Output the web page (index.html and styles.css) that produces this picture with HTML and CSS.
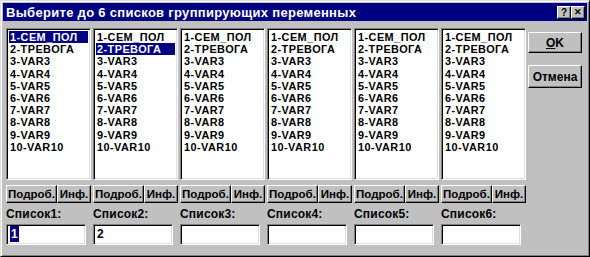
FILE: index.html
```html
<!DOCTYPE html>
<html lang="ru">
<head>
<meta charset="utf-8">
<title>Выберите до 6 списков группирующих переменных</title>
<link rel="stylesheet" href="styles.css">
</head>
<body>
<div class="window">
  <div class="titlebar">
    <span class="title">Выберите до 6 списков группирующих переменных</span>
    <div class="tbtns">
      <span class="tbtn">?</span><span class="tbtn x">✕</span>
    </div>
  </div>
  <div class="content">
    <div class="cols">
      <div class="col">
        <ul class="list">
          <li class="sel focus">1-СЕМ_ПОЛ</li><li>2-ТРЕВОГА</li><li>3-VAR3</li><li>4-VAR4</li><li>5-VAR5</li><li>6-VAR6</li><li>7-VAR7</li><li>8-VAR8</li><li>9-VAR9</li><li>10-VAR10</li>
        </ul>
        <div class="btnrow"><span class="btn wide">Подроб.</span><span class="btn narrow">Инф.</span></div>
        <div class="label">Список1:</div>
        <div class="input"><span class="seltext">1</span></div>
      </div>
      <div class="col">
        <ul class="list">
          <li>1-СЕМ_ПОЛ</li><li class="sel">2-ТРЕВОГА</li><li>3-VAR3</li><li>4-VAR4</li><li>5-VAR5</li><li>6-VAR6</li><li>7-VAR7</li><li>8-VAR8</li><li>9-VAR9</li><li>10-VAR10</li>
        </ul>
        <div class="btnrow"><span class="btn wide">Подроб.</span><span class="btn narrow">Инф.</span></div>
        <div class="label">Список2:</div>
        <div class="input">2</div>
      </div>
      <div class="col">
        <ul class="list">
          <li>1-СЕМ_ПОЛ</li><li>2-ТРЕВОГА</li><li>3-VAR3</li><li>4-VAR4</li><li>5-VAR5</li><li>6-VAR6</li><li>7-VAR7</li><li>8-VAR8</li><li>9-VAR9</li><li>10-VAR10</li>
        </ul>
        <div class="btnrow"><span class="btn wide">Подроб.</span><span class="btn narrow">Инф.</span></div>
        <div class="label">Список3:</div>
        <div class="input"></div>
      </div>
      <div class="col">
        <ul class="list">
          <li>1-СЕМ_ПОЛ</li><li>2-ТРЕВОГА</li><li>3-VAR3</li><li>4-VAR4</li><li>5-VAR5</li><li>6-VAR6</li><li>7-VAR7</li><li>8-VAR8</li><li>9-VAR9</li><li>10-VAR10</li>
        </ul>
        <div class="btnrow"><span class="btn wide">Подроб.</span><span class="btn narrow">Инф.</span></div>
        <div class="label">Список4:</div>
        <div class="input"></div>
      </div>
      <div class="col">
        <ul class="list">
          <li>1-СЕМ_ПОЛ</li><li>2-ТРЕВОГА</li><li>3-VAR3</li><li>4-VAR4</li><li>5-VAR5</li><li>6-VAR6</li><li>7-VAR7</li><li>8-VAR8</li><li>9-VAR9</li><li>10-VAR10</li>
        </ul>
        <div class="btnrow"><span class="btn wide">Подроб.</span><span class="btn narrow">Инф.</span></div>
        <div class="label">Список5:</div>
        <div class="input"></div>
      </div>
      <div class="col">
        <ul class="list">
          <li>1-СЕМ_ПОЛ</li><li>2-ТРЕВОГА</li><li>3-VAR3</li><li>4-VAR4</li><li>5-VAR5</li><li>6-VAR6</li><li>7-VAR7</li><li>8-VAR8</li><li>9-VAR9</li><li>10-VAR10</li>
        </ul>
        <div class="btnrow"><span class="btn wide">Подроб.</span><span class="btn narrow">Инф.</span></div>
        <div class="label">Список6:</div>
        <div class="input"></div>
      </div>
    </div>
    <div class="side">
      <span class="btn big ok"><u>O</u>K</span>
      <span class="btn big cancel">Отмена</span>
    </div>
  </div>
</div>
</body>
</html>
```
FILE: styles.css
```css
html, body {
  margin: 0;
  padding: 0;
  background: #c0c0c0;
}
body {
  font-family: "Liberation Sans", Arial, sans-serif;
  font-size: 12px;
  color: #000;
}
.window {
  box-sizing: border-box;
  width: 590px;
  height: 257px;
  background: #c0c0c0;
  border-top: 1px solid #dfdfdf;
  border-left: 1px solid #dfdfdf;
  border-right: 1px solid #000;
  border-bottom: 1px solid #000;
  box-shadow: inset 1px 1px 0 #fff, inset -1px -1px 0 #808080;
  padding: 2px;
}
.titlebar {
  height: 18px;
  background: #000080;
  display: flex;
  align-items: center;
  justify-content: space-between;
  padding: 0 2px 0 3px;
}
.title {
  color: #fff;
  font-weight: bold;
  font-size: 13px;
  letter-spacing: 0.3px;
}
.tbtns {
  display: flex;
}
.tbtn {
  box-sizing: border-box;
  width: 14px;
  height: 13px;
  background: #c0c0c0;
  border-top: 1px solid #fff;
  border-left: 1px solid #fff;
  border-right: 1px solid #000;
  border-bottom: 1px solid #000;
  box-shadow: inset -1px -1px 0 #808080;
  font-weight: bold;
  font-size: 10px;
  line-height: 11px;
  text-align: center;
}
.tbtn.x {
  font-size: 9px;
}
.content {
  display: flex;
  padding: 7px 0 0 3px;
}
.cols {
  display: flex;
  gap: 2px;
}
.col {
  width: 85px;
  display: flex;
  flex-direction: column;
}
.list {
  box-sizing: border-box;
  list-style: none;
  margin: 0;
  height: 152px;
  background: #fff;
  border-top: 1px solid #808080;
  border-left: 1px solid #808080;
  border-right: 1px solid #fff;
  border-bottom: 1px solid #fff;
  box-shadow: inset 1px 1px 0 #000, inset -1px -1px 0 #dfdfdf;
  padding: 2px 2px 0 2px;
  font-weight: bold;
  font-size: 10.9px;
  letter-spacing: 0.45px;
}
.list li {
  height: 12.2px;
  line-height: 12.2px;
  padding-left: 1px;
  white-space: nowrap;
}
.list li.sel {
  background: #000080;
  color: #fff;
}
.btnrow {
  display: flex;
  margin-top: 5px;
}
.btn {
  box-sizing: border-box;
  display: flex;
  align-items: center;
  justify-content: center;
  background: #c0c0c0;
  border-top: 1px solid #fff;
  border-left: 1px solid #fff;
  border-right: 1px solid #000;
  border-bottom: 1px solid #000;
  box-shadow: inset -1px -1px 0 #808080;
  font-weight: bold;
  height: 18px;
}
.btn.wide { width: 51px; font-size: 11.5px; }
.btn.narrow { width: 34px; font-size: 11.5px; }
.label {
  margin-top: 4px;
  height: 14px;
  line-height: 14px;
  font-weight: bold;
  letter-spacing: 0.2px;
}
.input {
  box-sizing: border-box;
  margin-top: 3px;
  width: 80px;
  height: 21px;
  background: #fff;
  border-top: 1px solid #808080;
  border-left: 1px solid #808080;
  border-right: 1px solid #fff;
  border-bottom: 1px solid #fff;
  box-shadow: inset 1px 1px 0 #000, inset -1px -1px 0 #dfdfdf;
  padding: 2px 3px;
  line-height: 15px;
  font-weight: bold;
}
.seltext {
  background: #000080;
  color: #fff;
  padding: 1px 1px;
}
.side {
  display: flex;
  flex-direction: column;
  margin-left: 2px;
}
.btn.big {
  width: 54px;
  height: 21px;
}
.ok { margin-top: 4px; }
.cancel { margin-top: 12px; height: 23px !important; }
```
